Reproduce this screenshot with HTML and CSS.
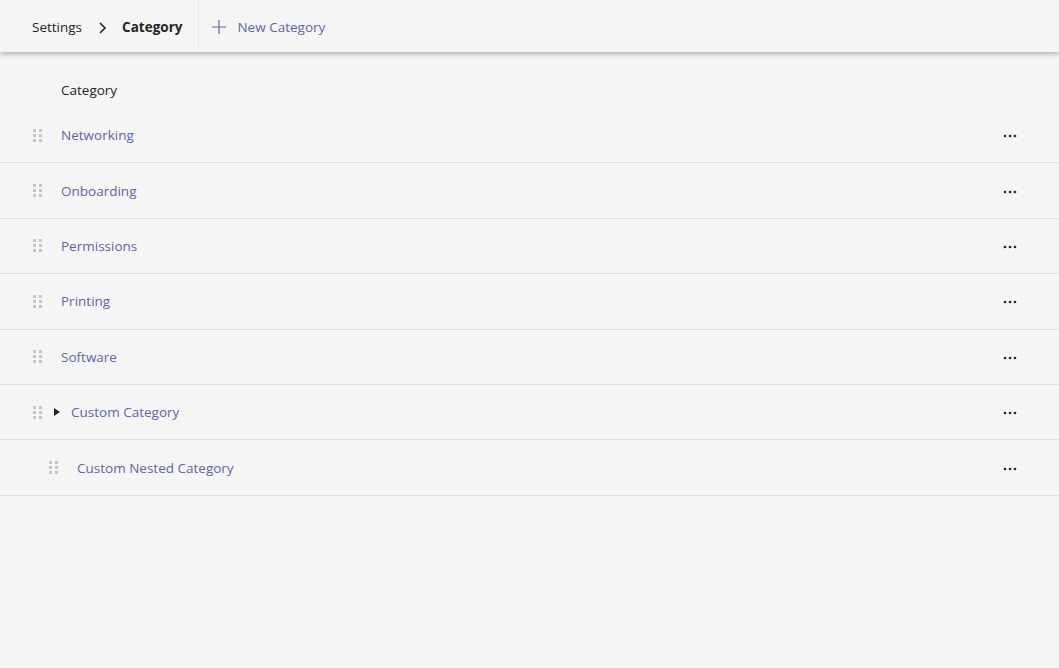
FILE: index.html
```html
<!DOCTYPE html>
<html lang="en">
<head>
    <meta charset="UTF-8">
    <title>Category</title>
    <link rel="stylesheet" href="styles.css">
</head>
<body>
    <header class="top-bar">
        <nav class="breadcrumb">
            <span class="crumb">Settings</span>
            <svg class="chevron" width="16" height="16" viewBox="0 0 16 16"><path d="M6 3l5 5-5 5" fill="none" stroke="#252423" stroke-width="1.6"/></svg>
            <span class="crumb current">Category</span>
        </nav>
        <div class="divider"></div>
        <button class="new-btn">
            <svg width="16" height="16" viewBox="0 0 16 16"><path d="M8 1v14M1 8h14" stroke="#6264a7" stroke-width="1.2" fill="none"/></svg>
            <span>New Category</span>
        </button>
    </header>

    <main class="list">
        <div class="list-head">Category</div>

        <div class="row">
            <span class="grip"><i></i><i></i><i></i><i></i><i></i><i></i></span>
            <span class="name">Networking</span>
            <svg class="more" width="14" height="4" viewBox="0 0 14 4"><circle cx="2" cy="2" r="1.3"/><circle cx="7" cy="2" r="1.3"/><circle cx="12" cy="2" r="1.3"/></svg>
        </div>
        <div class="row">
            <span class="grip"><i></i><i></i><i></i><i></i><i></i><i></i></span>
            <span class="name">Onboarding</span>
            <svg class="more" width="14" height="4" viewBox="0 0 14 4"><circle cx="2" cy="2" r="1.3"/><circle cx="7" cy="2" r="1.3"/><circle cx="12" cy="2" r="1.3"/></svg>
        </div>
        <div class="row">
            <span class="grip"><i></i><i></i><i></i><i></i><i></i><i></i></span>
            <span class="name">Permissions</span>
            <svg class="more" width="14" height="4" viewBox="0 0 14 4"><circle cx="2" cy="2" r="1.3"/><circle cx="7" cy="2" r="1.3"/><circle cx="12" cy="2" r="1.3"/></svg>
        </div>
        <div class="row">
            <span class="grip"><i></i><i></i><i></i><i></i><i></i><i></i></span>
            <span class="name">Printing</span>
            <svg class="more" width="14" height="4" viewBox="0 0 14 4"><circle cx="2" cy="2" r="1.3"/><circle cx="7" cy="2" r="1.3"/><circle cx="12" cy="2" r="1.3"/></svg>
        </div>
        <div class="row">
            <span class="grip"><i></i><i></i><i></i><i></i><i></i><i></i></span>
            <span class="name">Software</span>
            <svg class="more" width="14" height="4" viewBox="0 0 14 4"><circle cx="2" cy="2" r="1.3"/><circle cx="7" cy="2" r="1.3"/><circle cx="12" cy="2" r="1.3"/></svg>
        </div>
        <div class="row">
            <span class="grip"><i></i><i></i><i></i><i></i><i></i><i></i></span>
            <svg class="caret" width="6" height="8" viewBox="0 0 6 8"><path d="M0 0l6 4-6 4z" fill="#252423"/></svg>
            <span class="name">Custom Category</span>
            <svg class="more" width="14" height="4" viewBox="0 0 14 4"><circle cx="2" cy="2" r="1.3"/><circle cx="7" cy="2" r="1.3"/><circle cx="12" cy="2" r="1.3"/></svg>
        </div>
        <div class="row nested">
            <span class="grip"><i></i><i></i><i></i><i></i><i></i><i></i></span>
            <span class="name">Custom Nested Category</span>
            <svg class="more" width="14" height="4" viewBox="0 0 14 4"><circle cx="2" cy="2" r="1.3"/><circle cx="7" cy="2" r="1.3"/><circle cx="12" cy="2" r="1.3"/></svg>
        </div>
    </main>
</body>
</html>
```

FILE: styles.css
```css
* {
    margin: 0;
    padding: 0;
    box-sizing: border-box;
}

body {
    font-family: 'Open Sans', 'Noto Sans', sans-serif;
    font-size: 13.5px;
    background: #f5f5f5;
    color: #252423;
}

/* Верхня панель */
.top-bar {
    height: 52px;
    display: flex;
    align-items: stretch;
    background: #f5f5f5;
    box-shadow: 0 2px 5px rgba(0, 0, 0, 0.28);
    position: relative;
    z-index: 1;
}

.breadcrumb {
    display: flex;
    align-items: center;
    padding: 2px 16px 0 32px;
}

.crumb {
    color: #252423;
}

.crumb.current {
    font-weight: 700;
}

.chevron {
    margin: 1px 12px 0 12px;
}

.divider {
    width: 1px;
    background: #e6e6e6;
    margin-bottom: 4px;
}

.new-btn {
    display: flex;
    align-items: center;
    gap: 10px;
    border: none;
    background: none;
    font: inherit;
    color: #6264a7;
    padding: 2px 0 0 12px;
}

/* Список */
.list {
    padding-top: 26px;
}

.list-head {
    padding-left: 61px;
    height: 30px;
    line-height: 24px;
    color: #252423;
}

.row {
    height: 55.4px;
    display: flex;
    align-items: center;
    border-bottom: 1px solid #e1dfdd;
    padding-left: 33px;
    padding-right: 42px;
}

.row.nested {
    padding-left: 49px;
}

.grip {
    display: grid;
    grid-template-columns: 3px 3px;
    gap: 2px 3px;
    width: 9px;
    margin-right: 19px;
}

.grip i {
    width: 3px;
    height: 3px;
    background: #c8c6c4;
}

.caret {
    margin: 0 11px 0 0;
}

.row:has(.caret) .grip {
    margin-right: 12px;
}

.name {
    color: #6264a7;
    flex: 1;
}

.more {
    fill: #252423;
    margin-top: 2px;
}
```
